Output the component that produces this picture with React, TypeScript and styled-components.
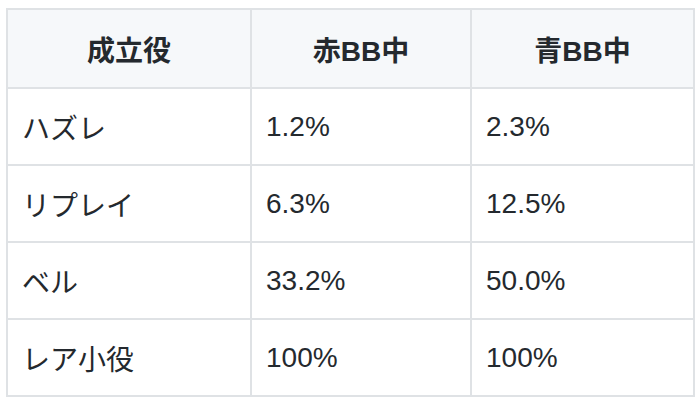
import React from "react";
import styled, { createGlobalStyle } from "styled-components";

const Global = createGlobalStyle`
  html, body { margin: 0; padding: 0; background: #ffffff; }
  body {
    font-family: "Liberation Sans", "Noto Sans CJK JP", sans-serif;
    color: #24292e;
  }
`;

const Page = styled.div`
  padding: 8px 0 0 6px;
`;

const Table = styled.table`
  border-collapse: collapse;
  table-layout: fixed;
  width: 687px;
  font-size: 28px;
`;

const HeadCell = styled.th`
  border: 2px solid #dfe2e5;
  background: #f6f8fa;
  font-weight: 700;
  text-align: center;
  height: 77px;
  padding: 0 14px;
`;

const Cell = styled.td`
  border: 2px solid #dfe2e5;
  background: #ffffff;
  height: 75px;
  padding: 0 14px;
  text-align: left;
`;

const rows = [
  ["ハズレ", "1.2%", "2.3%"],
  ["リプレイ", "6.3%", "12.5%"],
  ["ベル", "33.2%", "50.0%"],
  ["レア小役", "100%", "100%"],
];

export default function App() {
  return (
    <>
      <Global />
      <Page>
        <Table>
          <colgroup>
            <col style={{ width: 244 }} />
            <col style={{ width: 220 }} />
            <col style={{ width: 223 }} />
          </colgroup>
          <thead>
            <tr>
              <HeadCell>成立役</HeadCell>
              <HeadCell>赤BB中</HeadCell>
              <HeadCell>青BB中</HeadCell>
            </tr>
          </thead>
          <tbody>
            {rows.map((r) => (
              <tr key={r[0]}>
                {r.map((c, i) => (
                  <Cell key={i}>{c}</Cell>
                ))}
              </tr>
            ))}
          </tbody>
        </Table>
      </Page>
    </>
  );
}
